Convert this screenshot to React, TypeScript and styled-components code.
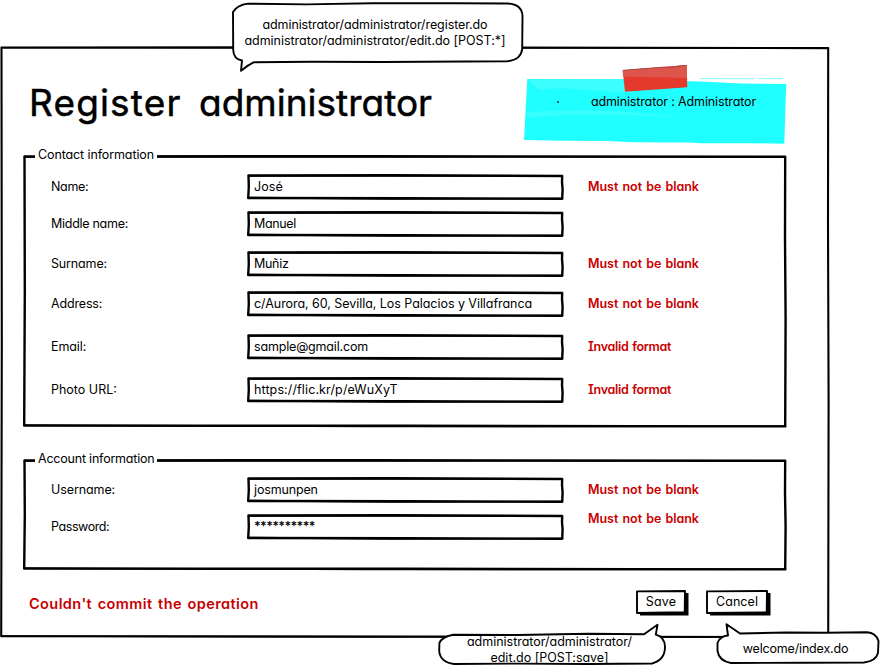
import React from "react";
import styled, { createGlobalStyle, css } from "styled-components";

const GlobalStyle = createGlobalStyle`
  * { box-sizing: border-box; }
  body { margin: 0; background: #fff; }
`;

const Page = styled.div`
  position: relative;
  width: 880px;
  height: 666px;
  padding-top: 46px;
  overflow: hidden;
  color: #000;
  font: 400 12.5px/16px Inter, "Noto Sans", sans-serif;
  font-feature-settings: "cv11";
`;

const Text = styled.span<{ $track?: number }>`
  white-space: pre;
  letter-spacing: ${(p) => p.$track ?? 0}px;
`;

const Window = styled.main`
  position: relative;
  width: 830px;
  height: 592px;
  padding: 27px 43px 0 23px;
`;

const Outline = styled.svg`
  position: absolute;
  inset: 0;
  overflow: visible;
  pointer-events: none;
  fill: none;
  stroke: #000;
  stroke-linecap: round;
  stroke-linejoin: round;
`;

const Header = styled.header`
  display: flex;
  justify-content: space-between;
  height: 74px;
  padding: 0 1px 0 6px;
`;

const Title = styled.h1`
  margin: 7px 0 0;
  font-size: 37px;
  font-weight: 400;
  line-height: 46px;
  word-spacing: 6px;
  white-space: nowrap;
  -webkit-text-stroke: 0.5px #000;
`;

const Note = styled.aside`
  position: relative;
  display: flex;
  width: 263px;
  height: 66px;
  margin: 6px 0 0;
  padding: 15px 0 0 34px;
`;

const NoteArt = styled.svg`
  position: absolute;
  left: 0;
  top: -14px;
`;

const NoteItem = styled.div`
  position: relative;
  display: flex;
  align-items: center;
  height: 16px;
  gap: 32px;
`;

const Bullet = styled.i`
  width: 2px;
  height: 2px;
  border-radius: 1px;
  background: #033;
`;

const Group = styled.section<{ $height: number; $after: number }>`
  position: relative;
  height: ${(p) => p.$height}px;
  margin-bottom: ${(p) => p.$after}px;
`;

const Legend = styled.h2`
  position: relative;
  display: inline-block;
  height: 16px;
  margin: 0 0 0 12px;
  padding: 0 3px;
  background: #fff;
  font: inherit;
`;

const Fields = styled.div<{ $top: number }>`
  display: flex;
  flex-direction: column;
  padding: ${(p) => p.$top}px 0 0 28px;
`;

const Row = styled.div<{ $gap: number }>`
  display: grid;
  grid-template-columns: 196px 317px 1fr;
  align-items: center;
  height: 26px;
  margin-top: ${(p) => p.$gap}px;
`;

const Input = styled.div<{ $masked?: boolean }>`
  position: relative;
  height: 26px;
  padding: 5px 0 0 7px;
  font-weight: ${(p) => (p.$masked ? 600 : 400)};
`;

const alert = css`
  color: #c80000;
  font-weight: 600;
`;

const FieldError = styled.div<{ $raise?: number }>`
  ${alert}
  padding-left: 24px;
  margin-top: ${(p) => -(p.$raise ?? 0)}px;
  font-feature-settings: "cv11", "cv08";
  word-spacing: 1px;
`;

const Footer = styled.footer`
  display: flex;
  align-items: flex-start;
  padding-left: 6px;
`;

const Failure = styled.p`
  ${alert}
  flex: 1;
  margin: 6px 0 0;
  font-size: 14.5px;
  word-spacing: 1.5px;
`;

const Button = styled.button<{ $width: number; $after: number }>`
  position: relative;
  display: flex;
  justify-content: center;
  width: ${(p) => p.$width}px;
  height: 24px;
  margin-right: ${(p) => p.$after}px;
  padding: 4px 0 0;
  border: 0;
  background: transparent;
  color: inherit;
  font: inherit;
  font-feature-settings: inherit;
`;

const Callout = styled.div<{ $x: number; $y: number; $w: number; $h: number; $pad: number }>`
  position: absolute;
  left: ${(p) => p.$x}px;
  top: ${(p) => p.$y}px;
  width: ${(p) => p.$w}px;
  height: ${(p) => p.$h}px;
  padding: ${(p) => p.$pad}px 5px 0 0;
  display: flex;
  flex-direction: column;
  align-items: center;
`;

const FrontText = styled(Text)`
  position: relative;
`;

const FrameSlot = styled.div`
  position: absolute;
  inset: 8px 0 0 0;
`;

/* Hand-drawn rectangle: an even stroke with a second, slightly skewed pass. */
function Sketch({ w, h, stroke = 2, skew = 0.8 }: { w: number; h: number; stroke?: number; skew?: number }) {
  return (
    <Outline width={w} height={h} strokeWidth={stroke}>
      <path d={`M1.5 1.5L${w * 0.45} 1.2L${w - 1.8} ${1.2 + skew}L${w - 2} ${h * 0.3}L${w - 1.4} ${h * 0.6}L${w - 1.8} ${h - 1.2}L${w * 0.5} ${h - 1.8}L1.2 ${h - 2}L1.8 ${h * 0.5}Z`} />
      <path d={`M1.5 1.8L${w * 0.4} ${1.2 + skew}L${w - 2} ${1.5 + skew / 2}M${w - 1.5} ${h - 1.5}L${w * 0.45} ${h - 1.2}L1.5 ${h - 2.4}`} strokeWidth={stroke * 0.7} />
    </Outline>
  );
}

function GroupFrame({ h }: { h: number }) {
  return (
    <FrameSlot>
      <Sketch w={764} h={h} stroke={2.4} skew={0.6} />
    </FrameSlot>
  );
}

function PushButton({ label, width, after, track }: { label: string; width: number; after: number; track: number }) {
  return (
    <Button $width={width} $after={after}>
      <Outline width={width} height={24}>
        <path d={`M4 3H${width + 2.5}V25.5H4Z`} fill="#000" stroke="none" />
        <path d={`M1 1.4L${width - 1} 1L${width - 1.3} 22.3L1 23Z`} fill="#fff" strokeWidth="1.9" />
      </Outline>
      <FrontText $track={track}>{label}</FrontText>
    </Button>
  );
}

type Field = {
  label: string;
  labelTrack: number;
  value: string;
  track: number;
  gap: number;
  masked?: boolean;
  error?: string;
  raise?: number;
};

const contact: Field[] = [
  { label: "Name:", labelTrack: -0.3, value: "José", track: 0.12, gap: 0, error: "Must not be blank" },
  { label: "Middle name:", labelTrack: -0.28, value: "Manuel", track: -0.34, gap: 11 },
  { label: "Surname:", labelTrack: -0.15, value: "Muñiz", track: -0.3, gap: 14, error: "Must not be blank" },
  { label: "Address:", labelTrack: -0.16, value: "c/Aurora, 60, Sevilla, Los Palacios y Villafranca", track: -0.05, gap: 14, error: "Must not be blank" },
  { label: "Email:", labelTrack: -0.1, value: "sample@gmail.com", track: -0.17, gap: 17, error: "Invalid format" },
  { label: "Photo URL:", labelTrack: 0, value: "https://flic.kr/p/eWuXyT", track: 0.12, gap: 17, error: "Invalid format" },
];

const account: Field[] = [
  { label: "Username:", labelTrack: -0.1, value: "josmunpen", track: -0.15, gap: 0, error: "Must not be blank" },
  { label: "Password:", labelTrack: -0.42, value: "**********", track: -0.66, masked: true, gap: 11, error: "Must not be blank", raise: 16 },
];

function FieldRows({ fields, top }: { fields: Field[]; top: number }) {
  return (
    <Fields $top={top}>
      {fields.map((f) => (
        <Row key={f.label} $gap={f.gap}>
          <Text $track={f.labelTrack}>{f.label}</Text>
          <Input $masked={f.masked}>
            <Sketch w={317} h={26} stroke={2.4} />
            <Text $track={f.track}>{f.value}</Text>
          </Input>
          {f.error && (
            <FieldError $raise={f.raise}>
              <Text $track={f.error === "Invalid format" ? -0.3 : -0.03}>{f.error}</Text>
            </FieldError>
          )}
        </Row>
      ))}
    </Fields>
  );
}

export default function App() {
  return (
    <>
      <GlobalStyle />
      <Page>
        <Window>
          <Sketch w={830} h={592.3} stroke={2.1} skew={0.9} />
          <Header>
            <Title>
              <Text $track={1.15}>Register </Text>
              <Text $track={0}>administrator</Text>
            </Title>
            <Note>
              <NoteArt width="264" height="82" viewBox="523 65 264 82">
                <path d="M527.3 79L623 79.2L700 81.5L741 83.4L786.3 84L785.8 96L784.3 143.7L750 143.2L700 143.3L690 142.4L633 142.2L606 141L563 140.7L524 140Z" fill="#20ffff" />
                <path d="M700 78.6L754 78.8M759 78.6H783" stroke="#7cffff" />
                <path d="M527.3 79.5L622 79.5L628 93L560 88L540 90Z" fill="#3cffff" />
                <path d="M526 118Q570 112 680 117L640 113Q590 108 527 112Z" fill="#38ffff" />
                <path d="M622.7 70.3L686.7 65L687.3 87.2L625 91.7Z" fill="#e5392e" />
                <path d="M622.7 70.3L686.7 65L687 78L623 76.5Z" fill="#de554c" />
                <path d="M623 70.3L663 67.2L668 68L686.5 65.2" stroke="#97443f" strokeWidth=".8" fill="none" />
              </NoteArt>
              <NoteItem>
                <Bullet />
                <Text $track={-0.14}>administrator : Administrator</Text>
              </NoteItem>
            </Note>
          </Header>

          <Group $height={281} $after={23}>
            <GroupFrame h={272.6} />
            <Legend>
              <Text $track={-0.11}>Contact information</Text>
            </Legend>
            <FieldRows fields={contact} top={11} />
          </Group>

          <Group $height={120} $after={19}>
            <GroupFrame h={111.6} />
            <Legend>
              <Text $track={-0.21}>Account information</Text>
            </Legend>
            <FieldRows fields={account} top={10} />
          </Group>

          <Footer>
            <Failure>
              <Text $track={0.42}>Couldn't commit the operation</Text>
            </Failure>
            <PushButton label="Save" width={50} after={20} track={0.2} />
            <PushButton label="Cancel" width={62} after={19} track={0.06} />
          </Footer>
        </Window>

        <Callout $x={232} $y={2} $w={291} $h={70} $pad={15}>
          <Outline width="291" height="70" strokeWidth="1.9">
            <path fill="#fff" d="M16 1.6L75 2.4L140 1.3L225 1.2L275 1.5Q290 2 290.5 14L290.2 47Q289 58 275 59.3L150 60L80 59.7L22 60.2Q16 63 9 68.8L10 58.5Q1.5 57 1.2 48L1 10Q5 3 16 1.6Z" />
          </Outline>
          <FrontText $track={-0.09}>administrator/administrator/register.do</FrontText>
          <FrontText $track={-0.02}>administrator/administrator/edit.do [POST:*]</FrontText>
        </Callout>

        <Callout $x={438} $y={624} $w={228} $h={42} $pad={10}>
          <Outline width="228" height="42" strokeWidth="1.9">
            <path fill="#fff" d="M15 10.8L80 11L150 9.8L206 10.3L219.5 .8L217.8 10.6Q227 13 227 23Q227 36 214 39.5L150 40L80 39.6L16 40Q2 38 1.2 27L1.4 19Q4 13 15 10.8Z" />
          </Outline>
          <FrontText $track={-0.02}>administrator/administrator/</FrontText>
          <FrontText $track={-0.02}>edit.do [POST:save]</FrontText>
        </Callout>

        <Callout $x={716} $y={623} $w={164} $h={43} $pad={18}>
          <Outline width="164" height="43" strokeWidth="1.9">
            <path fill="#fff" d="M10.5 1.2L24 10.5L70 9.5L110 9.7L151 9.3Q160 10 162.5 18L162 30Q160 38 148 39.5L90 39.8L50 39.9L15 40Q3 38 1.5 28L1.5 20Q4 13 12 12.5L10.5 1.2Z" />
          </Outline>
          <FrontText $track={-0.17}>welcome/index.do</FrontText>
        </Callout>
      </Page>
    </>
  );
}
